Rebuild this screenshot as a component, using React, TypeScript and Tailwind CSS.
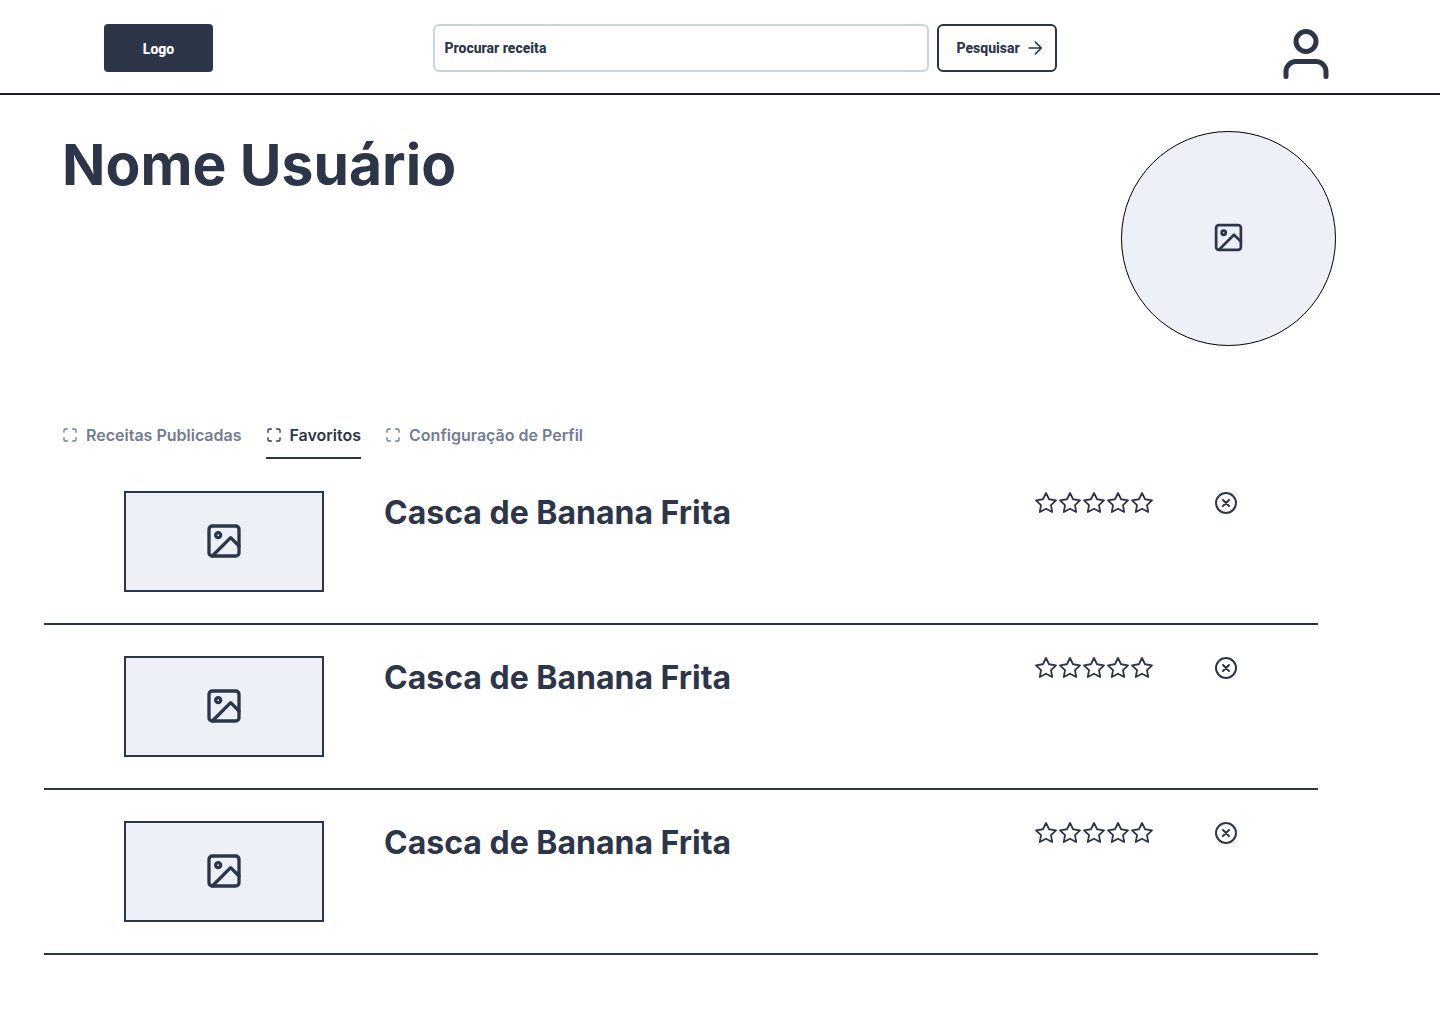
import type { ReactNode } from 'react';

const recipes = [
  { id: 1, name: 'Casca de Banana Frita' },
  { id: 2, name: 'Casca de Banana Frita' },
  { id: 3, name: 'Casca de Banana Frita' },
];

const tabs = [
  { label: 'Receitas Publicadas', active: false },
  { label: 'Favoritos', active: true },
  { label: 'Configuração de Perfil', active: false },
];

function Icon({ className, stroke = 2, children }: { className: string; stroke?: number; children: ReactNode }) {
  return (
    <svg
      viewBox="0 0 24 24"
      fill="none"
      stroke="currentColor"
      strokeWidth={stroke}
      strokeLinecap="round"
      strokeLinejoin="round"
      aria-hidden="true"
      className={className}
    >
      {children}
    </svg>
  );
}

function ImageIcon({ className }: { className: string }) {
  return (
    <Icon className={className}>
      <rect x="3" y="3" width="18" height="18" rx="2" />
      <circle cx="8.5" cy="8.5" r="1.5" />
      <path d="M21 15l-5-5L5 21" />
    </Icon>
  );
}

function Header() {
  return (
    <header className="flex items-start justify-between border-b-2 border-[#1a1a2e] px-[104px] pt-6 pb-[9px] font-['Roboto',sans-serif] text-sm font-extrabold">
      <button type="button" className="h-12 w-[109px] rounded bg-[#2d3648] pt-0.5 text-white">
        Logo
      </button>
      <form className="flex w-[624px] gap-2" onSubmit={(e) => e.preventDefault()}>
        <input
          type="text"
          aria-label="Procurar receita"
          placeholder="Procurar receita"
          className="h-12 min-w-0 flex-1 rounded-md border-2 border-[#cbd2e0] px-[10px] placeholder:text-[#2d3648] placeholder:opacity-100"
        />
        <button
          type="submit"
          className="flex h-12 w-[120px] items-center justify-between rounded-md border-2 border-[#2d3648] pr-[10px] pl-[18px]"
        >
          Pesquisar
          <Icon className="size-5 shrink-0" stroke={2}>
            <path d="M5 12h14M12.5 5l7 7-7 7" />
          </Icon>
        </button>
      </form>
      <button type="button" aria-label="Perfil">
        <Icon className="size-[60px]">
          <circle cx="12" cy="7" r="4" />
          <path d="M20 21v-2a4 4 0 0 0-4-4H8a4 4 0 0 0-4 4v2" />
        </Icon>
      </button>
    </header>
  );
}

function Rating() {
  return (
    <div role="img" aria-label="Avaliação" className="flex">
      {[1, 2, 3, 4, 5].map((n) => (
        <Icon key={n} className="size-6" stroke={1.8}>
          <path d="M12 2l3.09 6.26L22 9.27l-5 4.87 1.18 6.88L12 17.77l-6.18 3.25L7 14.14 2 9.27l6.91-1.01z" />
        </Icon>
      ))}
    </div>
  );
}

export default function App() {
  return (
    <div className="min-h-screen bg-white font-['Inter',sans-serif] text-[#2d3648]">
      <Header />
      <main className="pt-9">
        <section className="flex items-start justify-between pr-[104px] pl-[62px]">
          <h1 className="text-[57px] leading-[68px] font-bold">Nome Usuário</h1>
          <div className="flex size-[215px] items-center justify-center rounded-full border border-black bg-[#edf0f7] pb-0.5">
            <ImageIcon className="size-[33px]" />
          </div>
        </section>

        <nav className="mt-[66px] flex gap-6 pl-[62px]">
          {tabs.map((tab) => (
            <a
              key={tab.label}
              href="#"
              className={
                tab.active
                  ? 'flex h-[47px] items-center gap-2 border-b-2 border-[#2d3648] font-semibold'
                  : 'flex h-[47px] items-center gap-2 border-b-2 border-transparent font-semibold text-[#717d96]'
              }
            >
              <Icon className="size-4" stroke={2}>
                <path d="M8 3H5a2 2 0 0 0-2 2v3M21 8V5a2 2 0 0 0-2-2h-3M16 21h3a2 2 0 0 0 2-2v-3M3 16v3a2 2 0 0 0 2 2h3" />
              </Icon>
              {tab.label}
            </a>
          ))}
        </nav>

        <ul className="mr-[122px] ml-11">
          {recipes.map((recipe) => (
            <li key={recipe.id} className="flex items-start border-b-2 border-[#2d3648] px-20 pt-8 pb-[31px] not-first:pt-[31px]">
              <div className="flex h-[101px] w-[200px] items-center justify-center border-2 border-[#2d3648] bg-[#edf0f7] pb-px">
                <ImageIcon className="size-10" />
              </div>
              <h2 className="ml-[60px] flex-1 text-[32px] leading-[44px] font-bold">{recipe.name}</h2>
              <Rating />
              <button type="button" aria-label="Remover dos favoritos" className="ml-[60px]">
                <Icon className="size-6" stroke={2}>
                  <circle cx="12" cy="12" r="10" />
                  <path d="M15 9l-6 6M9 9l6 6" />
                </Icon>
              </button>
            </li>
          ))}
        </ul>
      </main>
    </div>
  );
}
